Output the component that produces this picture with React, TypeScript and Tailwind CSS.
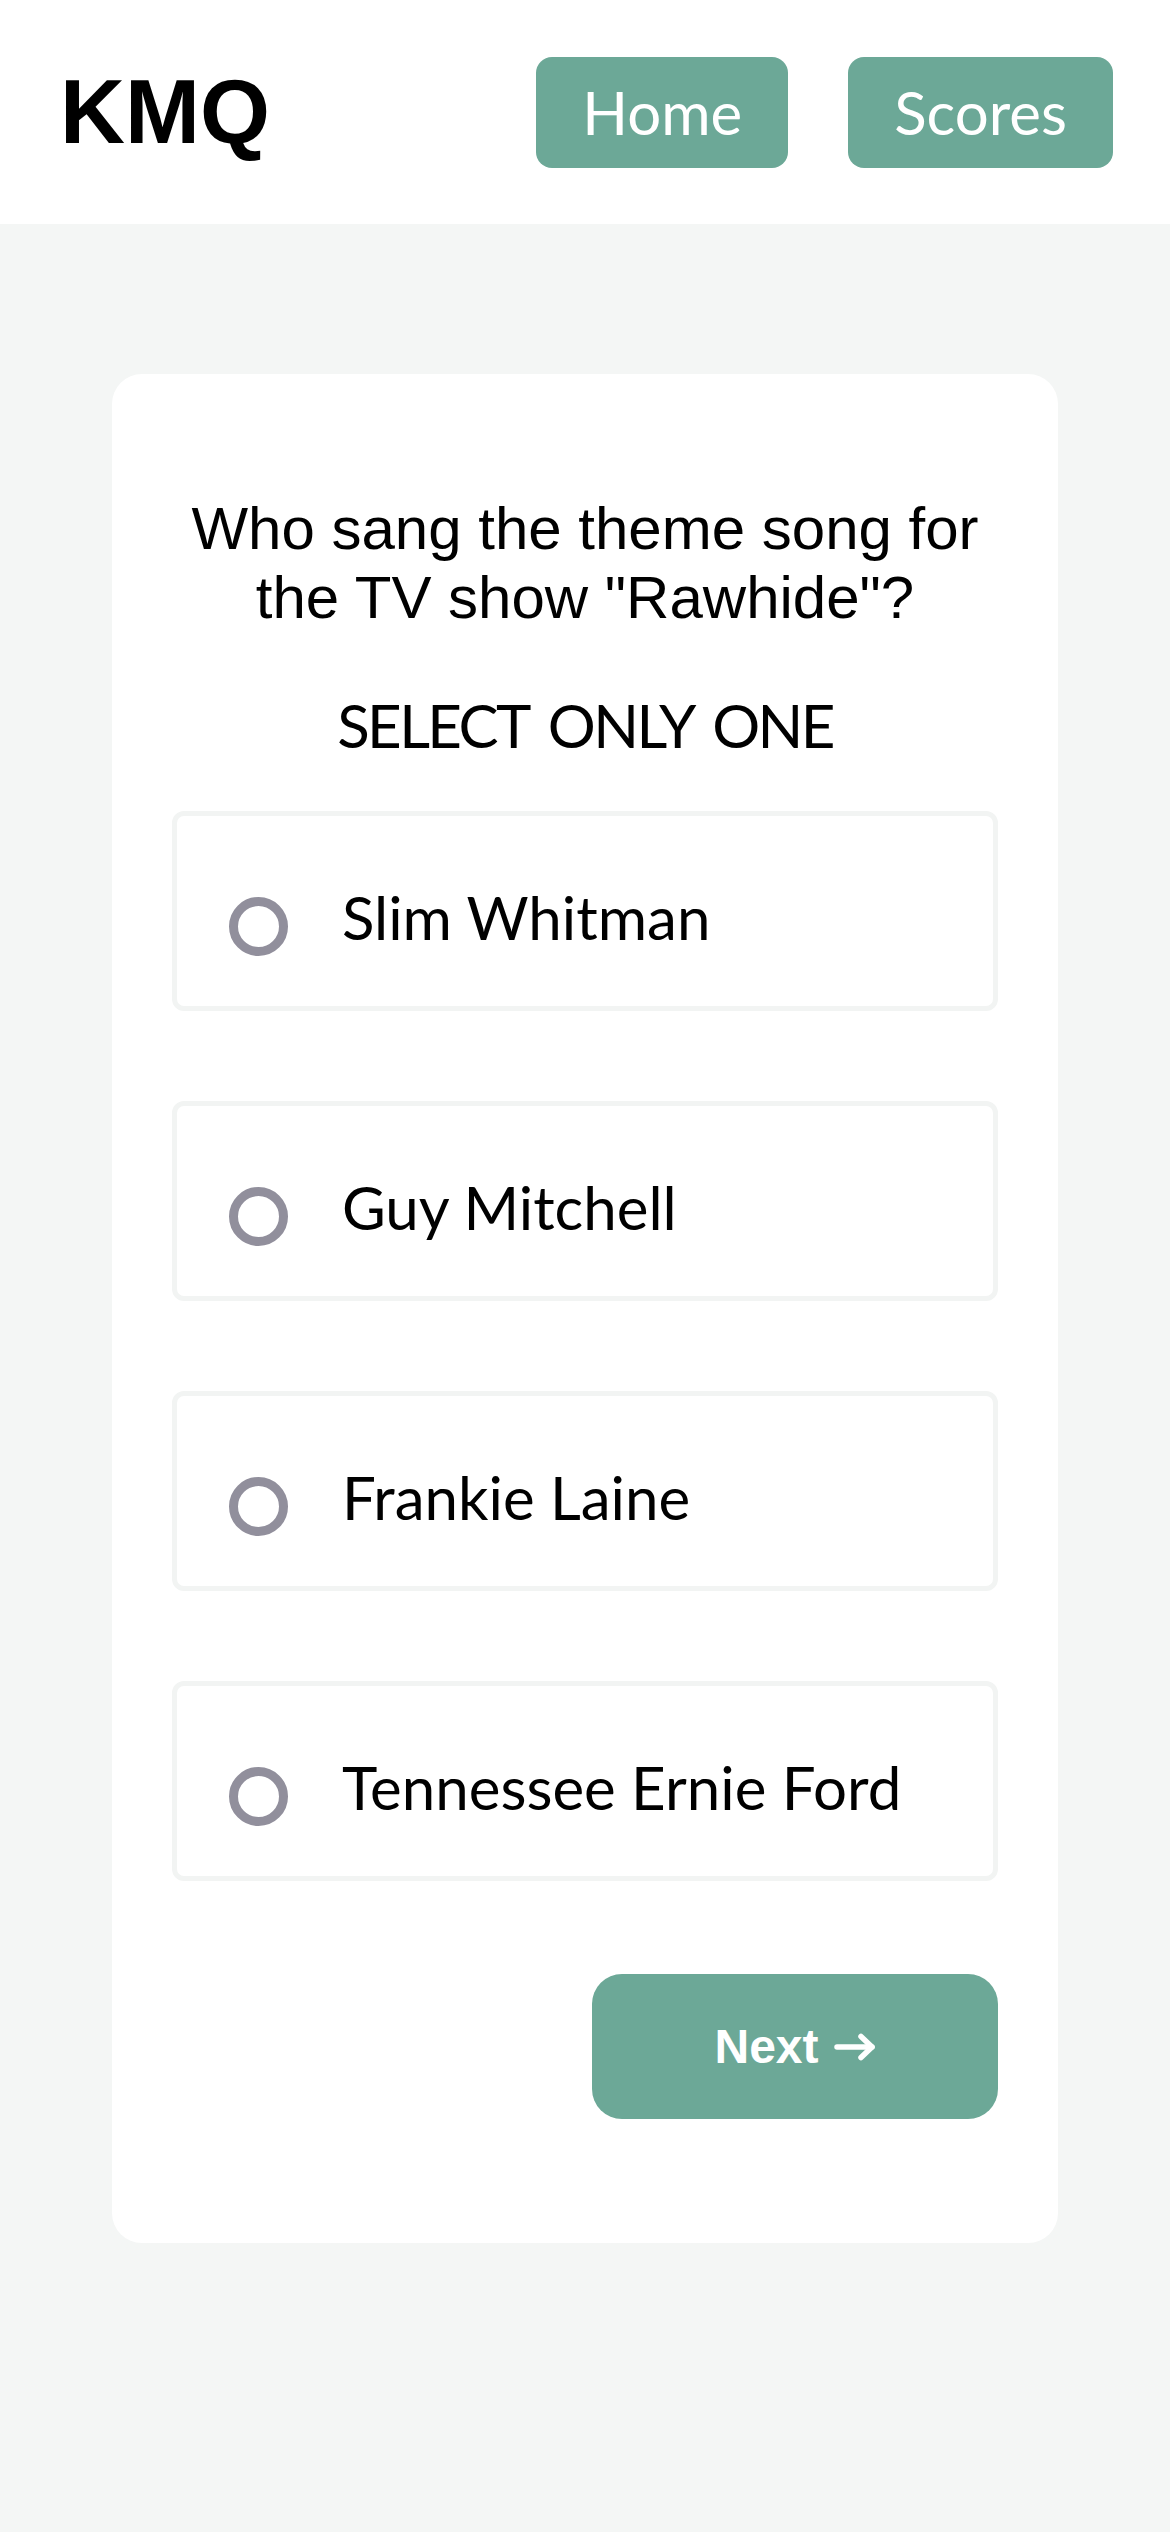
const options = ['Slim Whitman', 'Guy Mitchell', 'Frankie Laine', 'Tennessee Ernie Ford'];

function NavButton({ label }: { label: string }) {
  return (
    <button className="h-[111px] px-[46px] rounded-[16px] bg-[#6ca897] text-white text-[60px] leading-none font-[Lato,sans-serif]">
      {label}
    </button>
  );
}

function Option({ label }: { label: string }) {
  return (
    <label className="flex items-center h-[200px] border-[5px] border-[#f2f4f3] rounded-[12px] pl-[52px] bg-white cursor-pointer">
      <span className="mt-[30px] w-[59px] h-[59px] shrink-0 rounded-full border-[9px] border-[#918f9c]" />
      <span className="mt-[12px] ml-[54px] text-[60px] text-black font-[Lato,sans-serif]">{label}</span>
    </label>
  );
}

export default function App() {
  return (
    <div className="min-h-screen bg-[#f4f6f5]">
      <header className="h-[224px] bg-white flex items-center justify-between pl-[60px] pr-[57px]">
        <h1 className="text-[90px] font-bold leading-none text-black font-['Liberation_Sans',Arial,sans-serif]">
          KMQ
        </h1>
        <nav className="flex gap-[60px]">
          <NavButton label="Home" />
          <NavButton label="Scores" />
        </nav>
      </header>

      <main className="px-[112px] pt-[150px] pb-[290px]">
        <div className="bg-white rounded-[30px] px-[60px] pt-[120px] pb-[124px]">
          <h2 className="text-center text-[60px] leading-[69px] text-black font-['Liberation_Sans',Arial,sans-serif]">
            Who sang the theme song for the TV show "Rawhide"?
          </h2>
          <p className="mt-[48px] text-center text-[60px] tracking-[-2.6px] [word-spacing:8px] text-black font-[Lato,sans-serif]">
            SELECT ONLY ONE
          </p>

          <div className="mt-[41px] flex flex-col gap-[90px]">
            {options.map((o) => (
              <Option key={o} label={o} />
            ))}
          </div>

          <div className="mt-[93px] flex justify-end">
            <button className="w-[406px] h-[145px] rounded-[30px] bg-[#6ca897] text-white flex items-center justify-center gap-[15px] text-[48px] font-bold font-['Liberation_Sans',Arial,sans-serif]">
              Next
              <svg width="42" height="28" viewBox="0 0 42 28" fill="none" stroke="currentColor" strokeWidth="5.5" strokeLinecap="round" strokeLinejoin="round">
                <path d="M3 14H38" />
                <path d="M27 3.5L38 14L27 24.5" />
              </svg>
            </button>
          </div>
        </div>
      </main>
    </div>
  );
}
